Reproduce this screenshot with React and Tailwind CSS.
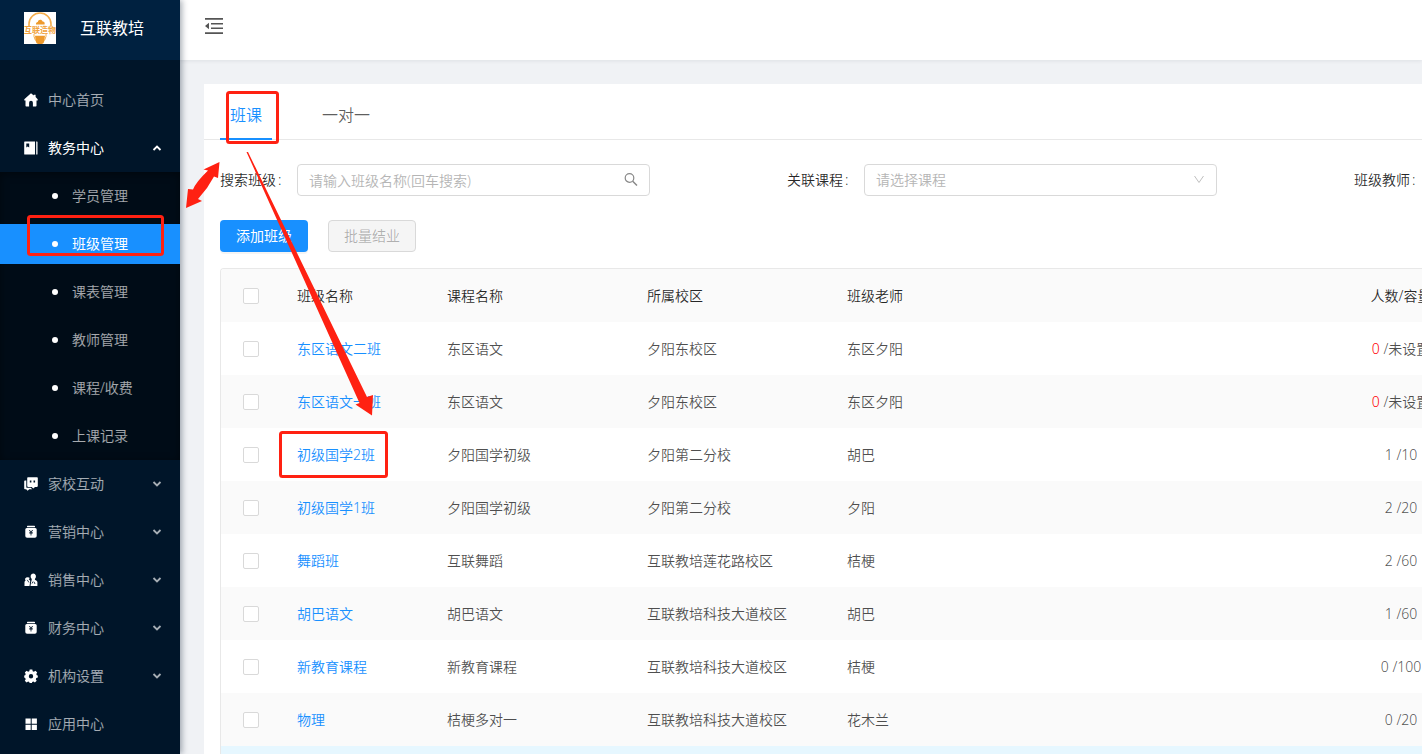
import { useState } from "react";
import clsx from "clsx";

const subItems = ["学员管理", "班级管理", "课表管理", "教师管理", "课程/收费", "上课记录"];

const initialRows = [
  { id: 1, name: "东区语文二班", course: "东区语文", campus: "夕阳东校区", teacher: "东区夕阳", count: 0, limit: "未设置" },
  { id: 2, name: "东区语文一班", course: "东区语文", campus: "夕阳东校区", teacher: "东区夕阳", count: 0, limit: "未设置" },
  { id: 3, name: "初级国学2班", course: "夕阳国学初级", campus: "夕阳第二分校", teacher: "胡巴", count: 1, limit: "10" },
  { id: 4, name: "初级国学1班", course: "夕阳国学初级", campus: "夕阳第二分校", teacher: "夕阳", count: 2, limit: "20" },
  { id: 5, name: "舞蹈班", course: "互联舞蹈", campus: "互联教培莲花路校区", teacher: "桔梗", count: 2, limit: "60" },
  { id: 6, name: "胡巴语文", course: "胡巴语文", campus: "互联教培科技大道校区", teacher: "胡巴", count: 1, limit: "60" },
  { id: 7, name: "新教育课程", course: "新教育课程", campus: "互联教培科技大道校区", teacher: "桔梗", count: 0, limit: "100" },
  { id: 8, name: "物理", course: "桔梗多对一", campus: "互联教培科技大道校区", teacher: "花木兰", count: 0, limit: "20" },
];

function Logo() {
  return (
    <svg viewBox="0 0 32 32" className="size-8 shrink-0" aria-hidden="true">
      <rect width="32" height="32" fill="#fff" />
      <path d="M5 14.500V12a11 11 0 0 1 22 0v2.500" fill="none" stroke="#f3ad4c" strokeWidth="1.600" />
      <path d="M12 12.500c-.2-1.600.6-2.400 1.800-2.500.5-2.900 4.200-2.900 4.800-.4 1.600-.1 2.400 1.100 2 2.900z" fill="#ee9a2c" />
      <text x="16" y="21" textAnchor="middle" fontSize="8" fontWeight="600" fill="#f0a23c">
        互联造物
      </text>
      <path d="M10 22v2.500l1.500 4M22 22v2.500l-1.500 4" fill="none" stroke="#f3ad4c" strokeWidth="1" />
      <path d="M11 23.800h10l-.8 5.500c-.2 1.500-1.200 2.700-2.700 2.700h-3c-1.500 0-2.500-1.200-2.700-2.700z" fill="#ee9a2c" />
    </svg>
  );
}

// Sidebar icons, all on a 14px grid
function MenuIcon({ name }) {
  return (
    <svg viewBox="0 0 14 14" className="size-3.5 shrink-0" fill="#fff" aria-hidden="true">
      {name === "home" && (
        <path d="M7 .3.300 6.200v1.300h1.200v5.300q0 .7.700.7h2.900V9.700a1.900 1.900 0 0 1 3.800 0v3.800h2.900q.7 0 .7-.7V7.500h1.200V6.200L11.600 4V1.800H9.800v.8z" />
      )}
      {name === "book" && (
        <>
          <path fillRule="evenodd" d="M.8.500H11v13H.8q-.6 0-.6-.6V1.100q0-.6.600-.6zM2.300 2.500v4l1.400-1 1.500 1v-4z" />
          <path d="M12.200.500h.7q.6 0 .6.600v11.800q0 .6-.6.600h-.7z" />
        </>
      )}
      {name === "chat" && (
        <>
          <path fillRule="evenodd" d="M4 .3h9q.8 0 .8.800v8q0 .8-.8.800H11L9.300 11.500 7.600 9.900H4q-.8 0-.8-.8v-8Q3.200.300 4 .3zM5.800 3.600v1.900h1.600V3.600zM9.500 3.600v1.900h1.600V3.600z" />
          <path d="M2.300 3.500v6.400q0 .9.900.9h3.500L8.300 12.300h-3L3.600 13.800 2.200 12.300H1q-.8 0-.8-.8V4.300q0-.8.800-.8z" />
        </>
      )}
      {name === "bag" && (
        <>
          <rect x="3" y="0.800" width="8" height="1.500" rx=".6" />
          <path
            fillRule="evenodd"
            d="M2.800 3h8.400q1.500 0 1.500 1.500v6.500q0 1.800-1.800 1.800H3.100q-1.800 0-1.800-1.800V4.500Q1.300 3 2.800 3zM5 5l1.200 2H5.300v.7h1.300v.7H5.300v.7h1.300v1.400h.8V9.100h1.300v-.7H7.400v-.7h1.300V7H7.800L9 5h-.9L7 6.700 5.900 5z"
          />
        </>
      )}
      {name === "people" && (
        <>
          <path d="M9.300.500a2.700 3 0 0 1 1.600 5.400v.9l1.700 1q.8.500.8 1.500V13H6.500L7 9.500 7.700 6.800v-.9A2.800 3 0 0 1 9.300.5z" />
          <path d="M3.900 4.200q1.200 0 1.900.9l-1 1.200 1.500 1.500L5.500 13H.5V9.200q0-1.200 1.100-1.700-.8-1-.4-2 .7-1.300 2.700-1.300z" />
          <path d="M3.200 6.800 5 9.500M8 10.500l1-2M10 8.800l1 2.200" stroke="#001529" strokeWidth=".8" />
        </>
      )}
      {name === "gear" && (
        <path
          fillRule="evenodd"
          d="M5.700.5h2.600l.4 1.700 1.200.5 1.500-.9 1.800 1.800-.9 1.500.5 1.200 1 .3v1.900l-1.500.5-.5 1.200.9 1.500-1.800 1.800-1.500-.9-1.200.5-.4 1.500H5.700l-.4-1.500-1.200-.5-1.500.9L.8 11.700l.9-1.500-.5-1.200-1-.5V6.600l1-.3.500-1.200-.9-1.500 1.800-1.800 1.500.9 1.200-.5zM7 5.100a2.200 2.200 0 1 0 0 4.400 2.200 2.200 0 0 0 0-4.400z"
        />
      )}
      {name === "grid" && (
        <path d="M1.500 1.500h5.200v5.200H1.500zM7.700 1.500h5.200v5.200H7.700zM1.500 7.700h5.200v5.200H1.500zM7.700 7.700h5.200v5.200H7.700z" />
      )}
    </svg>
  );
}

function MenuItem({ icon, label, arrow, active }) {
  return (
    <button
      type="button"
      className={clsx(
        "flex h-12 w-full items-center gap-2.5 pr-[18px] pl-6 text-left text-sm hover:text-white",
        active ? "font-normal text-white" : "text-white/65"
      )}
    >
      <MenuIcon name={icon} />
      <span className="flex-1">{label}</span>
      {arrow && (
        <svg viewBox="0 0 10 10" className="size-2.5" fill="none" stroke="currentColor" strokeWidth="1.800" aria-hidden="true">
          <path d={arrow === "up" ? "M1.500 7 5 3.500 8.500 7" : "M1.500 3 5 6.500 8.500 3"} />
        </svg>
      )}
    </button>
  );
}

function Sidebar() {
  return (
    <aside className="z-10 w-[180px] shrink-0 bg-[#001529] shadow-[2px_0_6px_rgba(0,21,41,0.35)]">
      <div className="flex h-[60px] items-center gap-6 bg-[#002140] pb-1 pl-6">
        <Logo />
        <h1 className="text-base font-normal text-white">互联教培</h1>
      </div>
      <nav className="pt-4">
        <MenuItem icon="home" label="中心首页" />
        <MenuItem icon="book" label="教务中心" arrow="up" active />
        <ul className="bg-[#000c17] shadow-[inset_0_2px_8px_rgba(0,0,0,0.45)]">
          {subItems.map((item) => (
            <li key={item} className="pt-1 pb-1">
              <a
                href="#"
                className={clsx(
                  "flex h-10 items-center gap-3.5 pl-[52px] text-sm",
                  item === "班级管理" ? "bg-[#1890ff] font-normal text-white" : "text-white/65 hover:text-white"
                )}
              >
                <span className="size-1.5 rounded-full bg-white" />
                {item}
              </a>
            </li>
          ))}
        </ul>
        <MenuItem icon="chat" label="家校互动" arrow="down" />
        <MenuItem icon="bag" label="营销中心" arrow="down" />
        <MenuItem icon="people" label="销售中心" arrow="down" />
        <MenuItem icon="bag" label="财务中心" arrow="down" />
        <MenuItem icon="gear" label="机构设置" arrow="down" />
        <MenuItem icon="grid" label="应用中心" />
      </nav>
    </aside>
  );
}

function Header() {
  return (
    <header className="flex h-[60px] shrink-0 items-center bg-white pb-2 pl-6 shadow-[0_1px_4px_rgba(0,21,41,0.08)]">
      <button type="button" aria-label="收起菜单">
        <svg viewBox="0 0 20 20" className="size-5" fill="#555" aria-hidden="true">
          <path d="M1 2h18v1.700H1zM7 7h12v1.500H7zM7 11.500h12V13H7zM1 16.300h18V18H1zM5 6.700v6.600L1 10z" />
        </svg>
      </button>
    </header>
  );
}

function SelectField({ id, label }) {
  return (
    <div className="flex shrink-0 items-center">
      <label htmlFor={id} className="w-[77px] text-sm text-black/85">
        {label}
        <span className="ml-0.5">:</span>
      </label>
      <div className="relative">
        <select
          id={id}
          defaultValue=""
          className="h-8 w-[353px] appearance-none rounded border border-[#d9d9d9] bg-white px-[11px] text-sm text-[#b5b5b5]"
        >
          <option value="">请选择课程</option>
        </select>
        <svg viewBox="0 0 12 12" className="pointer-events-none absolute top-2.5 right-3 size-3" fill="none" stroke="#bfbfbf" aria-hidden="true">
          <path d="M1.500 2 6 8.500 10.500 2" />
        </svg>
      </div>
    </div>
  );
}

function Checkbox({ label }) {
  return (
    <input
      type="checkbox"
      aria-label={label}
      className="mx-auto block size-4 appearance-none rounded-xs border border-[#d9d9d9] bg-white checked:bg-[#1890ff]"
    />
  );
}

function ClassTable() {
  return (
    <div className="mt-4 overflow-hidden rounded-tl border-t border-l border-[#e8e8e8]">
      <table className="w-full min-w-[1230px] table-fixed text-left text-sm text-black/70">
        <thead>
          <tr className="h-[53px] bg-[#fafafa] text-black/85">
            <th className="w-[60px]">
              <Checkbox label="全选" />
            </th>
            <th className="w-[150px] px-4 font-[350]">班级名称</th>
            <th className="w-[200px] px-4 font-[350]">课程名称</th>
            <th className="w-[200px] px-4 font-[350]">所属校区</th>
            <th className="px-4 font-[350]">班级老师</th>
            <th className="w-[100px] text-center font-[350]">人数/容量</th>
          </tr>
        </thead>
        <tbody>
          {initialRows.map((row) => (
            <tr key={row.id} className="h-[53px] even:bg-[#fafafa] hover:bg-[#e6f7ff]">
              <td>
                <Checkbox label={row.name} />
              </td>
              <td className="px-4">
                <a href="#" className="text-[#1890ff]">
                  {row.name}
                </a>
              </td>
              <td className="px-4">{row.course}</td>
              <td className="px-4">{row.campus}</td>
              <td className="px-4">{row.teacher}</td>
              <td className="text-center whitespace-nowrap">
                <span className={row.limit === "未设置" ? "text-[#f00]" : ""}>{row.count}</span> /{row.limit}
              </td>
            </tr>
          ))}
          <tr className="h-[53px] bg-[#e6f7ff]">
            <td colSpan={6} />
          </tr>
        </tbody>
      </table>
    </div>
  );
}

// Red guide marks drawn over the page
function Annotations() {
  return (
    <svg className="pointer-events-none absolute top-0 left-0 z-20" width="400" height="490" fill="#ff2112" aria-hidden="true">
      <g fill="none" stroke="#ff2112" strokeWidth="3">
        <rect x="227.500" y="92.500" width="50" height="50" rx="2" />
        <rect x="28.500" y="216.500" width="134" height="38" rx="2" />
        <rect x="280.500" y="432.500" width="106" height="44" rx="2" />
      </g>
      <path d="M219.500 162 203.500 169.500 208 170.500Q196 182 193 189.500L188 189 186 208 202 201 198 199 207 188 214 176.500 218 178z" />
      <path d="M246.500 152h1.500L367 397 373 395 372 415.500 355.500 404.500 359.500 403z" />
    </svg>
  );
}

export default function App() {
  const [tab, setTab] = useState("班课");

  return (
    <div className="relative flex h-screen overflow-hidden bg-[#f0f2f5] font-['Noto_Sans','Noto_Sans_CJK_SC',sans-serif] font-[350]">
      <Sidebar />
      <div className="flex min-w-0 flex-1 flex-col">
        <Header />
        <main className="mt-6 ml-6 flex-1 overflow-hidden bg-white">
          <div role="tablist" className="flex h-14 gap-10 border-b border-[#e8e8e8] pl-4">
            {["班课", "一对一"].map((name) => (
              <button
                key={name}
                type="button"
                role="tab"
                aria-selected={tab === name}
                onClick={() => setTab(name)}
                className={clsx(
                  "-mb-px border-b-2 px-2.5 pt-2 text-base",
                  tab === name ? "border-[#1890ff] text-[#1890ff]" : "border-transparent text-black/65"
                )}
              >
                {name}
              </button>
            ))}
          </div>

          <div className="pl-4">
            <div className="flex gap-[137px] overflow-hidden pt-6">
              <div className="flex shrink-0 items-center">
                <label htmlFor="search" className="w-[77px] text-sm text-black/85">
                  搜索班级
                  <span className="ml-0.5">:</span>
                </label>
                <div className="relative">
                  <input
                    id="search"
                    type="text"
                    placeholder="请输入班级名称(回车搜索)"
                    className="h-8 w-[353px] rounded border border-[#d9d9d9] px-[11px] text-sm placeholder:text-[#b5b5b5]"
                  />
                  <svg viewBox="0 0 14 14" className="absolute top-2 right-3 size-3.5" fill="none" stroke="#888" strokeWidth="1.200" aria-hidden="true">
                    <circle cx="5.500" cy="6" r="4.300" />
                    <path d="m8.700 9.200 4.300 4.300" strokeWidth="1.500" />
                  </svg>
                </div>
              </div>
              <SelectField id="course" label="关联课程" />
              <SelectField id="teacher" label="班级教师" />
            </div>

            <div className="mt-6 flex gap-5">
              <button type="button" className="h-8 w-[88px] rounded bg-[#1890ff] text-sm font-normal text-white shadow-[0_2px_0_rgba(0,0,0,0.045)]">
                添加班级
              </button>
              <button type="button" disabled className="h-8 w-[88px] rounded border border-[#d9d9d9] bg-[#f5f5f5] text-sm text-black/30">
                批量结业
              </button>
            </div>

            <ClassTable />
          </div>
        </main>
      </div>
      <Annotations />
    </div>
  );
}
